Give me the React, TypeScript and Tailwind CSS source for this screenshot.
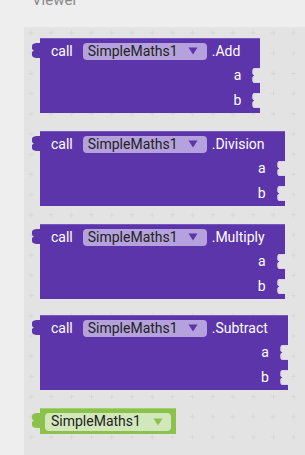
import React from "react";

const PURPLE = "#5c35ab";
const GREEN = "#8bc34a";
const WS_BG = "#e3e3e3";

// left output tab (puzzle knob)
const Tab = ({ color }: { color: string }) => (
  <svg width="8" height="15" viewBox="0 0 8 15" className="mt-[5px] shrink-0 block">
    <path
      d="M8 0 C3 0 0 0.5 0 3 L0 5.5 C0 6.8 1.6 6.8 1.6 7.5 C1.6 8.2 0 8.2 0 9.5 L0 12 C0 14.5 3 15 8 15 Z"
      fill={color}
    />
  </svg>
);

// empty value socket cut into the right edge
const Socket = () => (
  <svg width="8" height="15" viewBox="0 0 8 15" className="shrink-0 block">
    <path
      d="M8 0 L3 0 C1 0 0.5 1 0.5 3 L0.5 5.5 C0.5 6.8 2 6.8 2 7.5 C2 8.2 0.5 8.2 0.5 9.5 L0.5 12 C0.5 14 1 15 3 15 L8 15 Z"
      fill={WS_BG}
    />
    <path
      d="M8 0.5 L3 0.5 C1.3 0.5 1 1.3 1 3 L1 5.5 C1 6.8 2.5 6.8 2.5 7.5 C2.5 8.2 1 8.2 1 9.5 L1 12 C1 13.7 1.3 14.5 3 14.5 L8 14.5"
      fill="none"
      stroke="#d9cff0"
      strokeWidth="1"
    />
  </svg>
);

const Caret = ({ color }: { color: string }) => (
  <svg width="10" height="8" viewBox="0 0 10 8" className="block">
    <path d="M0.5 0.5 L9.5 0.5 L5 7.5 Z" fill={color} />
  </svg>
);

const MethodBlock = ({ method, className = "" }: { method: string; className?: string }) => (
  <div className={`flex items-start ${className}`}>
    <Tab color={PURPLE} />
    <div className="flex flex-col bg-[#5c35ab] border-t border-[#7656c2] text-white text-[14px]">
      <div className="h-[24px] flex items-center pl-[11px] pr-[20px]">
        <span>call</span>
        <div className="ml-[10px] h-[17px] rounded-[4px] bg-[#b5a2dc] flex items-center pl-[5px] pr-[9px] gap-[10px]">
          <span className="text-[#222222]">SimpleMaths1</span>
          <Caret color={PURPLE} />
        </div>
        <span className="ml-[5px]">.{method}</span>
      </div>
      {["a", "b"].map((p) => (
        <div key={p} className="h-[25px] flex items-center justify-end">
          <span className="mr-[11px]">{p}</span>
          <Socket />
        </div>
      ))}
    </div>
  </div>
);

export default function App() {
  return (
    <div
      className="w-[305px] h-[455px] bg-[#eeeeee] flex flex-col overflow-hidden"
      style={{ fontFamily: "Roboto, 'Liberation Sans', sans-serif" }}
    >
      <div className="h-[27px] shrink-0 pl-[32px]">
        <p className="text-[15px] leading-none text-[#8a8a8a] -mt-[7px]">Viewer</p>
      </div>
      <div className="flex flex-1">
        <div className="w-[24px] shrink-0" />
        <div className="relative flex-1 bg-[#e3e3e3] overflow-hidden">
          <svg className="absolute inset-0 w-full h-full">
            <defs>
              <pattern id="grid" width="20.2" height="20.2" x="-3.1" y="-4.1" patternUnits="userSpaceOnUse">
                <path d="M7.6 10.1 H12.6 M10.1 7.6 V12.6" stroke="#d6d6d6" strokeWidth="1" />
              </pattern>
            </defs>
            <rect width="100%" height="100%" fill="url(#grid)" />
          </svg>
          <div className="relative flex flex-col items-start pl-[8px] pt-[11px]">
            <MethodBlock method="Add" />
            <MethodBlock method="Division" className="mt-[18px]" />
            <MethodBlock method="Multiply" className="mt-[18px]" />
            <MethodBlock method="Subtract" className="mt-[16px]" />
            <div className="flex items-start mt-[18px]">
              <Tab color={GREEN} />
              <div className="h-[26px] bg-[#8bc34a] border-t border-[#a4d26f] flex items-center px-[5px]">
                <div className="h-[18px] rounded-[4px] bg-[#d2e8bc] flex items-center pl-[6px] pr-[8px] gap-[12px] text-[14px] text-[#222222]">
                  <span>SimpleMaths1</span>
                  <Caret color={GREEN} />
                </div>
              </div>
            </div>
          </div>
        </div>
      </div>
    </div>
  );
}
